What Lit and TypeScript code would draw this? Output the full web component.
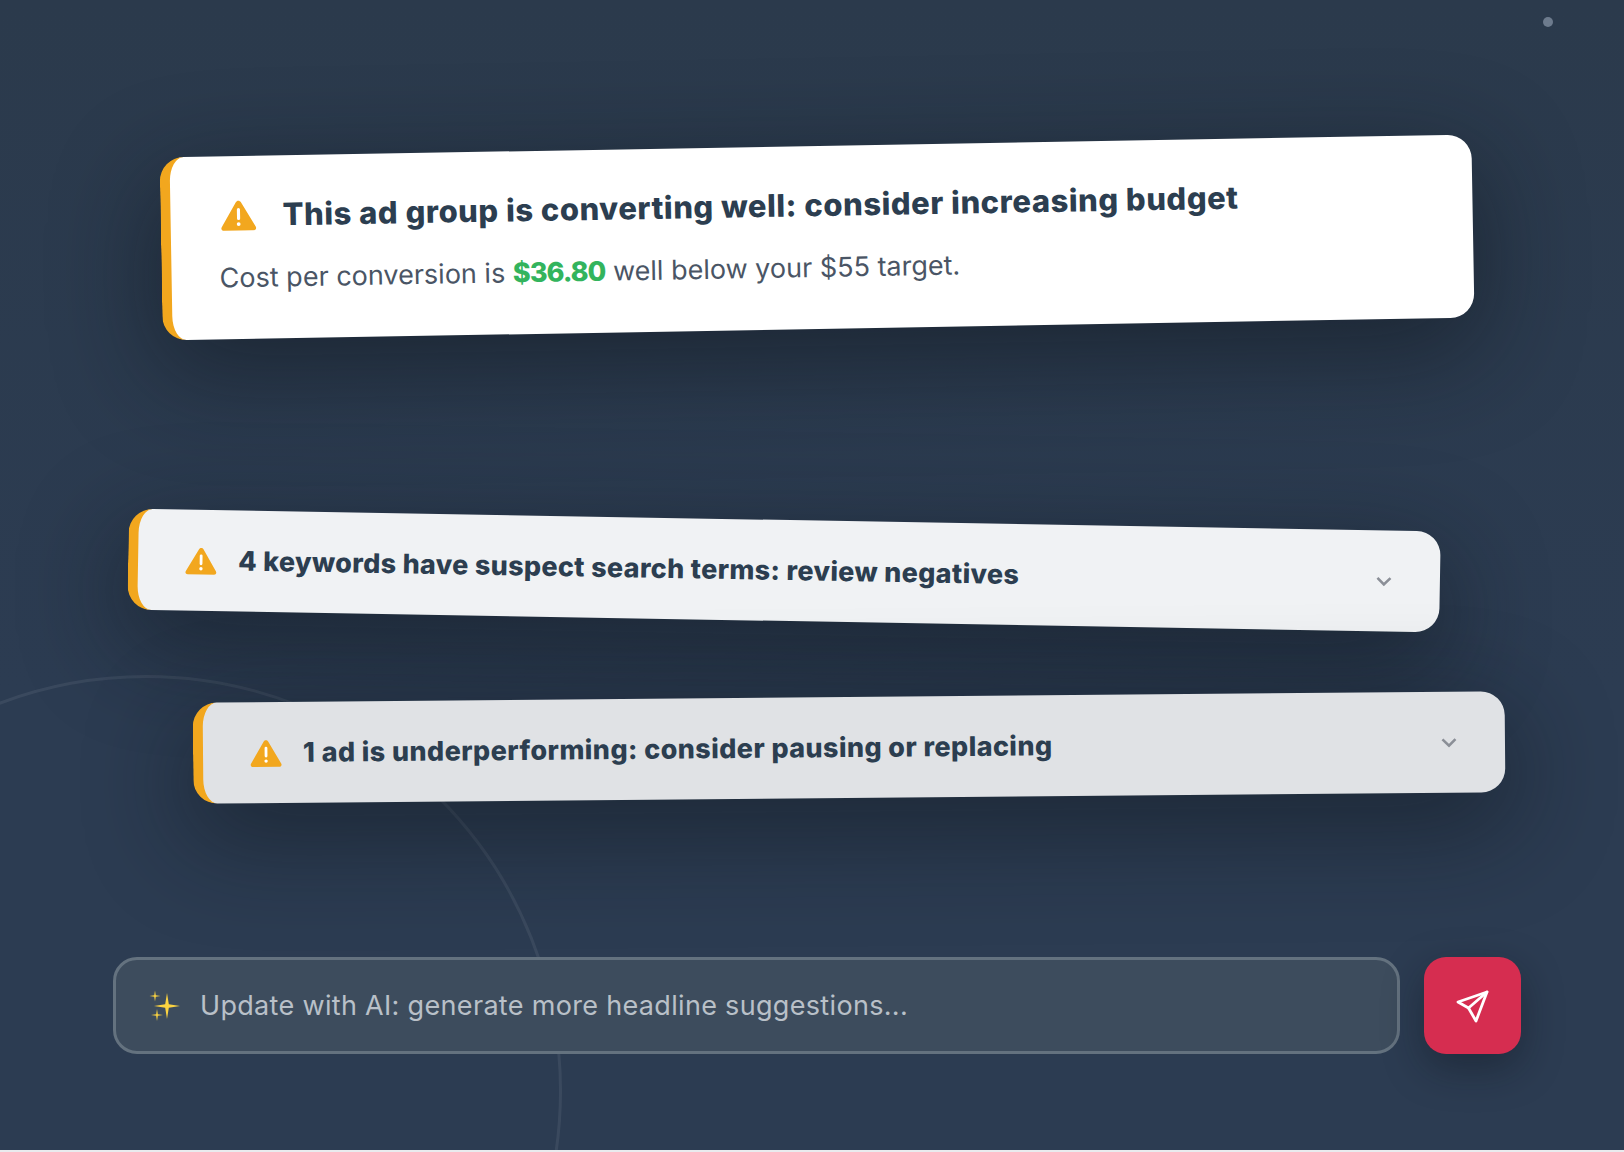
import { LitElement, html, css, svg } from "lit";
import { customElement } from "lit/decorators.js";

const warn = (cls: string) => html`<svg class="warn ${cls}" viewBox="0 0 32 28" aria-hidden="true">
  <path d="M16 1.2c.9 0 1.7.5 2.2 1.3l12.9 22c1 1.7-.2 3.3-2.1 3.3H3c-1.9 0-3.1-1.6-2.1-3.3l12.9-22c.5-.8 1.3-1.3 2.200-1.300z" fill="#f2a71e"/>
  <path d="M16 9v8" stroke="#fff" stroke-width="2.800" stroke-linecap="round"/>
  <circle cx="16" cy="22" r="1.700" fill="#fff"/>
</svg>`;

const chevron = html`<svg class="chev" viewBox="0 0 16 10" aria-hidden="true">
  <path d="M1.500 1.500 8 8l6.500-6.500" fill="none" stroke="#8b8f97" stroke-width="2.600"/>
</svg>`;

const star = (cx: number, cy: number, r: number) => {
  const k = r * 0.14;
  return svg`<path fill="#fbd341" d="M${cx} ${cy - r}L${cx + k} ${cy - k}L${cx + r} ${cy}L${cx + k} ${cy + k}L${cx} ${cy + r}L${cx - k} ${cy + k}L${cx - r} ${cy}L${cx - k} ${cy - k}Z"/>`;
};

@customElement("app-root")
export class AppRoot extends LitElement {
  static styles = css`
    :host {
      display: block;
      position: relative;
      width: 1624px;
      height: 1152px;
      overflow: hidden;
      box-sizing: border-box;
      padding-top: 146px;
      background: linear-gradient(#2b3a4c, #2c3c52 60%);
      font-family: Inter, "Noto Sans", sans-serif;
      color: #2c3e50;
    }
    .line {
      position: absolute;
      left: 0;
      right: 0;
      bottom: 0;
      height: 2px;
      background: #e9ebee;
    }
    .arc {
      position: absolute;
      left: -270px;
      top: 675px;
      width: 832px;
      height: 832px;
      border: 3px solid rgba(255, 255, 255, 0.07);
      border-radius: 50%;
      box-sizing: border-box;
    }
    .dot {
      position: absolute;
      left: 1543px;
      top: 17px;
      width: 10px;
      height: 10px;
      border-radius: 50%;
      background: #6d7b8d;
    }
    .card {
      position: relative;
      box-sizing: border-box;
      width: 1312px;
      border-left: 10px solid #f2a71e;
      border-radius: 24px;
      box-shadow: 0 30px 100px 8px rgba(12, 18, 26, 0.48);
    }
    .hero {
      height: 183px;
      margin-left: 161px;
      padding: 39px 50px 0;
      background: #fff;
      transform: rotate(-1deg);
    }
    .row {
      height: 101px;
      display: flex;
      align-items: center;
      padding: 0 48px 0 47px;
      gap: 21px;
    }
    .second {
      margin: 191px 0 0 128px;
      background: #f0f2f4;
      transform: rotate(1deg);
    }
    .third {
      margin: 76px 0 0 193px;
      background: #e0e2e5;
      transform: rotate(-0.5deg);
    }
    .third h3 { letter-spacing: 0.38px; }
    .head {
      display: flex;
      align-items: center;
      gap: 26px;
    }
    .warn { flex: none; width: 32px; height: 28px; }
    .warn.big { width: 36px; height: 32px; }
    h2 {
      margin: 0;
      font-size: 31px;
      line-height: 40px;
      font-weight: 800;
      letter-spacing: 0.52px;
    }
    h3 {
      flex: 1;
      margin: 0;
      font-size: 27px;
      line-height: 36px;
      font-weight: 800;
      letter-spacing: 0.3px;
    }
    p {
      margin: 25px 0 0 -2px;
      font-size: 27px;
      line-height: 36px;
      font-weight: 400;
      color: #4a5565;
      letter-spacing: 0;
    }
    b {
      font-weight: 800;
      color: #33b45d;
      letter-spacing: -0.9px;
    }
    .chev { flex: none; width: 16px; height: 10px; }
    .composer {
      display: flex;
      gap: 24px;
      margin: 159px 0 0 113px;
      width: 1408px;
      position: relative;
    }
    .field {
      flex: 1;
      height: 97px;
      box-sizing: border-box;
      display: flex;
      align-items: center;
      gap: 20px;
      padding: 0 32px;
      background: #3d4c5d;
      border: 3px solid #64727f;
      border-radius: 24px;
    }
    .field svg { flex: none; width: 32px; height: 32px; }
    .field span {
      font-size: 27px;
      color: #b9c0c8;
      letter-spacing: 0.32px;
    }
    .send {
      flex: none;
      width: 97px;
      height: 97px;
      padding: 0;
      border: 0;
      border-radius: 22px;
      background: #d62d50;
      display: flex;
      align-items: center;
      justify-content: center;
      box-shadow: 0 14px 40px rgba(12, 18, 26, 0.4);
    }
    .send svg { width: 34px; height: 34px; }
  `;

  render() {
    return html`
      <div class="arc"></div>
      <div class="dot"></div>
      <div class="line"></div>
      <section class="card hero">
        <div class="head">${warn("big")}<h2>This ad group is converting well: consider increasing budget</h2></div>
        <p>Cost per conversion is <b>$36.80</b> well below your $55 target.</p>
      </section>
      <section class="card row second">${warn("")}<h3>4 keywords have suspect search terms: review negatives</h3>${chevron}</section>
      <section class="card row third">${warn("")}<h3>1 ad is underperforming: consider pausing or replacing</h3>${chevron}</section>
      <div class="composer">
        <div class="field">
          <svg viewBox="0 0 32 32" aria-hidden="true">${star(19, 16, 13)}${star(7, 6, 5.500)}${star(9, 25, 6)}</svg>
          <span>Update with AI: generate more headline suggestions...</span>
        </div>
        <button class="send" aria-label="Send">
          <svg viewBox="0 0 34 34" fill="none" stroke="#fff" stroke-width="2.800" stroke-linejoin="round" stroke-linecap="round">
            <path d="M31 3 2 13l10.500 6L20 32z"/><path d="M31 3 12.500 19"/>
          </svg>
        </button>
      </div>
    `;
  }
}
